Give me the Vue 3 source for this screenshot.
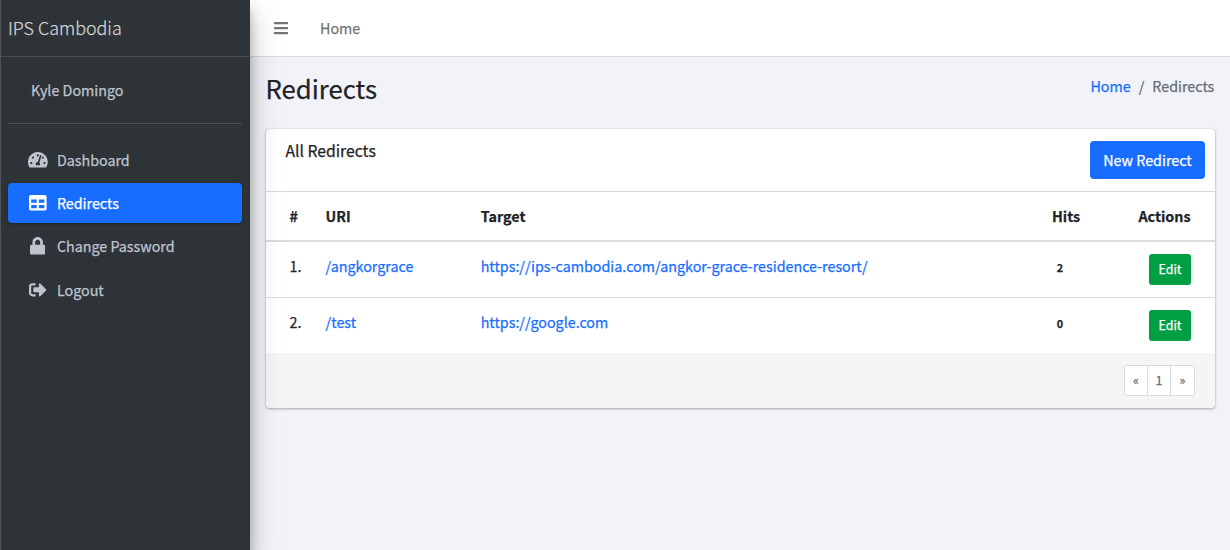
<script setup>
const nav = [
  { label: 'Dashboard', w: 576, path: 'M288 32C128.94 32 0 160.94 0 320c0 52.8 14.25 102.26 39.06 144.8 5.61 9.62 16.3 15.2 27.44 15.2h443c11.14 0 21.83-5.58 27.44-15.2C561.75 422.26 576 372.8 576 320c0-159.06-128.94-288-288-288zm0 64c14.71 0 26.58 10.13 30.32 23.65-1.11 2.26-2.64 4.23-3.45 6.67l-9.22 27.67c-5.13 3.49-10.97 6.01-17.64 6.01-17.67 0-32-14.33-32-32S270.33 96 288 96zM96 384c-17.67 0-32-14.33-32-32s14.33-32 32-32 32 14.33 32 32-14.33 32-32 32zm48-160c-17.67 0-32-14.33-32-32s14.33-32 32-32 32 14.33 32 32-14.33 32-32 32zm246.77-72.41l-61.33 184C343.13 347.33 352 364.54 352 384c0 11.72-3.38 22.55-8.88 32H232.88c-5.5-9.45-8.88-20.28-8.88-32 0-33.94 26.5-61.43 59.9-63.59l61.34-184.01c4.17-12.56 17.73-19.45 30.36-15.17 12.57 4.19 19.35 17.79 15.17 30.36zm14.66 57.2l15.52-46.55c3.47-1.29 7.13-2.23 11.05-2.23 17.67 0 32 14.33 32 32s-14.33 32-32 32c-11.38-.01-20.89-6.28-26.57-15.22zM480 384c-17.67 0-32-14.33-32-32s14.33-32 32-32 32 14.33 32 32-14.33 32-32 32z' },
  { label: 'Redirects', w: 512, active: true, path: 'M464 32H48C21.49 32 0 53.49 0 80v352c0 26.51 21.49 48 48 48h416c26.51 0 48-21.49 48-48V80c0-26.51-21.49-48-48-48zM224 416H64v-96h160v96zm0-160H64v-96h160v96zm224 160H288v-96h160v96zm0-160H288v-96h160v96z' },
  { label: 'Change Password', w: 448, path: 'M400 224h-24v-72C376 68.2 307.8 0 224 0S72 68.2 72 152v72H48c-26.5 0-48 21.5-48 48v192c0 26.5 21.5 48 48 48h352c26.5 0 48-21.5 48-48V272c0-26.5-21.5-48-48-48zm-104 0H152v-72c0-39.7 32.3-72 72-72s72 32.3 72 72v72z' },
  { label: 'Logout', w: 512, path: 'M497 273L329 441c-15 15-41 4.5-41-17v-96H152c-13.3 0-24-10.7-24-24v-96c0-13.3 10.7-24 24-24h136V88c0-21.4 25.9-32 41-17l168 168c9.3 9.4 9.3 24.6 0 34zM192 436v-40c0-6.6-5.4-12-12-12H96c-17.7 0-32-14.3-32-32V160c0-17.7 14.3-32 32-32h84c6.6 0 12-5.4 12-12V76c0-6.6-5.4-12-12-12H96c-53 0-96 43-96 96v192c0 53 43 96 96 96h84c6.6 0 12-5.4 12-12z' },
]
const rows = [
  { uri: '/angkorgrace', target: 'https://ips-cambodia.com/angkor-grace-residence-resort/', hits: 2 },
  { uri: '/test', target: 'https://google.com', hits: 0 },
]
</script>

<template>
  <div class="app">
    <aside class="sidebar">
      <a class="brand">IPS Cambodia</a>
      <div class="user">Kyle Domingo</div>
      <nav class="nav">
        <a v-for="n in nav" :key="n.label" class="nav-item" :class="{ active: n.active }">
          <span class="nav-icon">
            <svg :viewBox="`0 0 ${n.w} 512`" height="17.6"><path fill="currentColor" :d="n.path" /></svg>
          </span>
          <span>{{ n.label }}</span>
        </a>
      </nav>
    </aside>
    <div class="main">
      <header class="topbar">
        <svg class="bars" viewBox="0 0 448 512" width="14" height="16"><path fill="currentColor" d="M16 132h416c8.837 0 16-7.163 16-16V76c0-8.837-7.163-16-16-16H16C7.163 60 0 67.163 0 76v40c0 8.837 7.163 16 16 16zm0 160h416c8.837 0 16-7.163 16-16v-40c0-8.837-7.163-16-16-16H16c-8.837 0-16 7.163-16 16v40c0 8.837 7.163 16 16 16zm0 160h416c8.837 0 16-7.163 16-16v-40c0-8.837-7.163-16-16-16H16c-8.837 0-16 7.163-16 16v40c0 8.837 7.163 16 16 16z" /></svg>
        <a>Home</a>
      </header>
      <div class="heading">
        <h1>Redirects</h1>
        <div class="crumbs"><a>Home</a><span class="slash">/</span><span>Redirects</span></div>
      </div>
      <section class="card">
        <div class="card-header">
          <h3>All Redirects</h3>
          <button class="btn-new">New Redirect</button>
        </div>
        <div class="row head">
          <span>#</span><span>URI</span><span>Target</span><span>Hits</span><span class="right">Actions</span>
        </div>
        <div v-for="(r, i) in rows" :key="r.uri" class="row body">
          <span>{{ i + 1 }}.</span>
          <a>{{ r.uri }}</a>
          <a>{{ r.target }}</a>
          <span class="badge">{{ r.hits }}</span>
          <span class="right"><button class="btn-edit">Edit</button></span>
        </div>
        <div class="card-footer">
          <div class="pager"><span>«</span><span>1</span><span>»</span></div>
        </div>
      </section>
    </div>
  </div>
</template>

<style>
html, body { margin: 0; overflow: hidden; }
</style>

<style scoped>
* { box-sizing: border-box; }
.app {
  display: flex;
  height: 550px;
  background: #f2f3f8;
  color: #1f2327;
  font-family: "Noto Sans CJK SC", "Noto Sans", sans-serif;
  font-size: 14.3px;
  line-height: 24px;
  white-space: nowrap;
  -webkit-text-stroke: .25px currentColor;
}
button { font-family: inherit; border: 0; color: #fff; padding: 0 0 2px; }
a { color: #176dff; }
.sidebar {
  position: relative;
  z-index: 2;
  flex: none;
  width: 250px;
  background: #2e3337;
  border-left: 1px solid #4f5458;
  box-shadow: 0 14px 28px rgba(0, 0, 0, .25), 0 10px 10px rgba(0, 0, 0, .22);
}
.brand {
  display: block;
  height: 57px;
  padding: 15px 7px 0;
  border-bottom: 1px solid #474e53;
  color: #d0d2d4;
  font-size: 17.9px;
  font-weight: 300;
}
.user {
  height: 67px;
  margin: 0 8px 0 7px;
  padding: 21px 0 0 23px;
  border-bottom: 1px solid #4a5055;
  color: #bfc3cf;
}
.nav { display: flex; flex-direction: column; gap: 3.2px; margin: 16px 8px 0 7px; }
.nav-item {
  display: flex;
  align-items: center;
  height: 40px;
  padding-left: 17px;
  border-radius: 4px;
  color: #bfc3cf;
}
.nav-item:last-child { margin-top: .4px; }
.nav-item.active { background: #176dff; color: #fff; box-shadow: 0 1px 3px rgba(0, 0, 0, .12), 0 1px 2px rgba(0, 0, 0, .24); }
.nav-icon { display: flex; justify-content: center; width: 25.6px; margin-right: 6.3px; }
.nav-icon svg { margin-top: -1px; }
.main { flex: 1; min-width: 0; }
.topbar {
  display: flex;
  align-items: center;
  gap: 32px;
  height: 57px;
  padding-left: 24px;
  background: #fff;
  border-bottom: 1px solid #d8dce1;
  color: #757575;
}
.topbar a { color: #757575; }
.heading { display: flex; justify-content: space-between; height: 72px; padding: 14px 15.7px 0 15.6px; }
h1 { margin: 0; font-size: 25.7px; font-weight: 400; line-height: 34px; }
.crumbs { display: flex; padding-top: 3px; color: #666e76; }
.slash { padding: 0 8px; }
.card {
  width: 949px;
  margin-left: 16px;
  background: #fff;
  border-radius: 4px;
  box-shadow: 0 0 1px rgba(0, 0, 0, .25), 0 1px 3px rgba(0, 0, 0, .3);
  overflow: hidden;
}
.card-header {
  display: flex;
  justify-content: space-between;
  height: 63px;
  padding: 12px 10px 0 19.4px;
  border-bottom: 1px solid #d9dadc;
}
h3 { margin: -1px 0 0; font-size: 15.75px; font-weight: 400; line-height: 21px; }
.btn-new { width: 115px; height: 38px; border-radius: 4px; background: #176dff; font-size: 14.3px; }
.row {
  display: grid;
  grid-template-columns: 36px 155.2px 571.3px 70px 1fr;
  padding: 12px 24px 0 23.5px;
}
.head { height: 50px; border-bottom: 2px solid #d8dce1; font-weight: 700; }
.head .right { padding-right: .5px; }
.body { height: 55px; }
.body + .body { height: 56px; border-top: 1px solid #d8dade; }
.right { text-align: right; }
.badge { padding: 1px 0 0 4.8px; font-size: 10.8px; font-weight: 700; }
.btn-edit { display: block; width: 42px; height: 31px; margin-left: auto; border-radius: 3px; background: #009f43; font-size: 12.5px; }
.card-footer { display: flex; justify-content: flex-end; height: 55px; padding: 12px 20px 0; background: #f5f5f5; }
.pager {
  display: flex;
  height: 31px;
  border: 1px solid #d8dce1;
  border-radius: 3px;
  background: #fff;
  color: #666e76;
  font-size: 12.5px;
  line-height: 27px;
}
.pager span { width: 23px; text-align: center; }
.pager span:first-child { width: 22px; }
.pager span:last-child { width: 24px; }
.pager span + span { border-left: 1px solid #d8dce1; }
</style>
